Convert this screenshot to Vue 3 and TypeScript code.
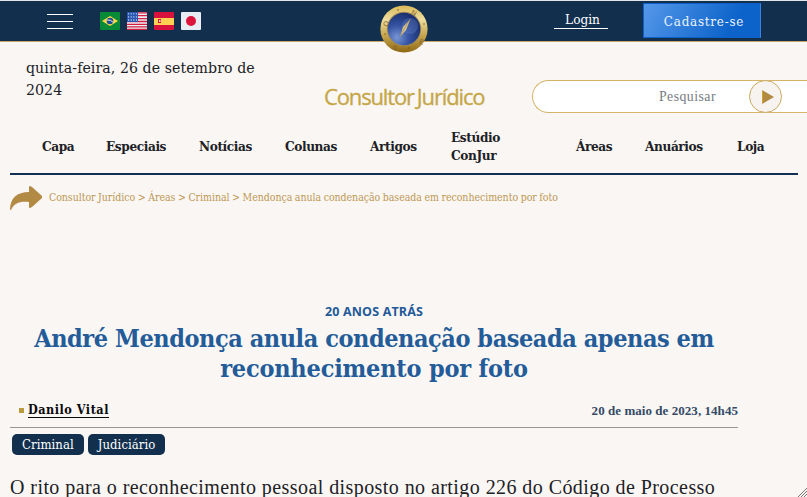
<script setup lang="ts">
const leftNav: string[] = ['Capa', 'Especiais', 'Notícias', 'Colunas', 'Artigos']
const tags: string[] = ['Criminal', 'Judiciário']
const stars: number[] = [0, 1, 2, 3, 4, 5, 6, 7, 8, 9, 10, 11]
</script>

<template>
  <div class="page">
    <header class="topbar">
      <button class="burger" aria-label="Menu"><i></i><i></i><i></i></button>
      <div class="flags">
        <svg viewBox="0 0 20 18"><rect width="20" height="18" rx="1" fill="#078b37" /><path d="M2 9 10 4l8 5-8 5z" fill="#ffda44" /><circle cx="10" cy="9" r="3.3" fill="#194b9b" /><path d="M7 8q4-.5 6 2.2" stroke="#e8edf2" fill="none" /></svg>
        <svg viewBox="0 0 20 18"><rect width="20" height="18" rx="1" fill="#eceef2" /><path d="M0 .8h20M0 3.7h20M0 6.6h20M0 9.5h20M0 12.3h20M0 14.9h20M0 17.5h20" stroke="#d21f43" stroke-width="1.3" /><path d="M0 0h11v10H0z" fill="#2856b0" /><circle v-for="s in stars" :key="s" :cx="1.6 + (s % 4) * 2.6" :cy="1.8 + Math.floor(s / 4) * 3.1" r=".65" fill="#dce6f7" /></svg>
        <svg viewBox="0 0 20 18"><rect width="20" height="18" rx="1" fill="#d8113d" /><path d="M0 6h20v7H0z" fill="#ffd052" /><path d="M4 7h3v4H4z" fill="#d8113d" /><path d="M5 8h1.5v2H5z" fill="#f4dcc1" /></svg>
        <svg viewBox="0 0 20 18"><rect width="20" height="18" rx="1" fill="#e9edf4" /><circle cx="10" cy="9" r="5" fill="#dc153c" /></svg>
      </div>
      <svg class="compass" viewBox="0 0 50 50">
        <defs>
          <linearGradient id="rim" x1="0" y1="0" x2="0" y2="1"><stop stop-color="#d9b958" /><stop offset=".3" stop-color="#eedd9f" /><stop offset=".62" stop-color="#c7a750" /><stop offset="1" stop-color="#8f6713" /></linearGradient>
          <radialGradient id="dial" cx=".28" cy=".76" r=".75"><stop stop-color="#7896d4" /><stop offset=".5" stop-color="#3453a2" /><stop offset="1" stop-color="#1c3274" /></radialGradient>
        </defs>
        <circle cx="25" cy="25" r="23.6" fill="url(#rim)" /><circle cx="25" cy="25" r="17.2" fill="#a28b55" /><circle cx="25" cy="25" r="16.3" fill="url(#dial)" />
        <circle cx="31" cy="22" r="8" fill="#6f8fd0" opacity=".3" />
        <path d="M31.5 15 27 26 21 33 24 23z" fill="#dcc68c" /><path d="M31.5 15 25 25 21 33" stroke="#8f7950" stroke-width=".6" fill="none" />
        <g class="marks"><text x="34" y="11" transform="rotate(24 34 11)">N</text><text x="9" y="21" transform="rotate(-60 9 21)">O</text><text x="15" y="46" transform="rotate(20 15 46)">S</text><text x="42" y="40" transform="rotate(20 42 40)">E</text></g>
        <path d="M19 5v2M44 20h2M5 30h2M30 43v2" stroke="#77571b" stroke-width=".8" />
      </svg>
      <div class="account"><a class="login">Login</a><a class="join">Cadastre-se</a></div>
    </header>

    <section class="masthead">
      <div class="today">quinta-feira, 26 de setembro de 2024</div>
      <div class="logo">Consultor<span>Jurídico</span></div>
      <div class="search"><span>Pesquisar</span><button aria-label="Buscar"><svg viewBox="0 0 12 14"><path d="M0 0 12 7 0 14z" fill="#b18a44" /><path d="M.5 1v12" stroke="#d1a52c" /></svg></button></div>
    </section>

    <nav class="nav">
      <a v-for="item in leftNav" :key="item">{{ item }}</a>
      <a class="studio">Estúdio ConJur</a><a>Áreas</a><a>Anuários</a><a>Loja</a>
    </nav>

    <div class="crumbs">
      <svg viewBox="0 0 32 24"><path d="M19 1Q19 0 20 0l2 1 10 9v2l-10 9-2 1q-1 0-1-1v-5C10 15 4 17 1 24H0C0 12 7 6 19 6z" fill="#b38a43" /></svg>
      <span>Consultor Jurídico &gt; Áreas &gt; Criminal &gt; Mendonça anula condenação baseada em reconhecimento por foto</span>
    </div>

    <article class="article">
      <div class="kicker">20 ANOS ATRÁS</div>
      <h1><span>André Mendonça anula condenação baseada apenas em</span><span class="second">reconhecimento por foto</span></h1>
      <div class="byline"><span class="author"><i></i><a>Danilo Vital</a></span><time>20 de maio de 2023, 14h45</time></div>
      <div class="tags"><a v-for="tag in tags" :key="tag">{{ tag }}</a></div>
      <p>O rito para o reconhecimento pessoal disposto no artigo 226 do Código de Processo</p>
    </article>
    <svg class="grip" viewBox="0 0 9 9"><path d="M0 9 9 0M3 9 9 3M6 9 9 6" stroke="#777" stroke-width="1" /></svg>
  </div>
</template>

<style>
body { margin: 0; background: #faf6f3; overflow: hidden; }
</style>
<style scoped>
* { box-sizing: border-box; }
.page { position: relative; width: 807px; height: 497px; overflow: hidden; background: #faf6f3; color: #202126; font-family: "DejaVu Serif Condensed", "DejaVu Serif", serif; font-stretch: condensed; }
button { border: 0; padding: 0; background: none; }
.topbar { position: relative; display: flex; height: 42px; border-top: 1px solid #e2e5e5; border-bottom: 1px solid #c9a766; background: #122f4d; }
.burger { display: flex; flex-direction: column; gap: 6px; width: 26px; margin: 13px 0 0 47px; }
.burger i { height: 1px; background: #fff; }
.flags { display: flex; gap: 7px; margin: 11px 0 0 27px; }
.flags svg { width: 20px; height: 18px; }
.compass { position: absolute; left: 379px; top: 3px; width: 50px; height: 50px; }
.marks { font: 7px "Liberation Sans", sans-serif; fill: #80632c; text-anchor: middle; }
.account { display: flex; margin-left: auto; padding-right: 46px; }
.login { width: 54px; height: 20px; margin: 8px 35px 0 0; padding-left: 3px; border-bottom: 1px solid #fff; color: #fff; font-size: 13.5px; line-height: 20px; text-align: center; }
.join { width: 118px; height: 35px; margin-top: 2px; padding-left: 4px; border: 1px solid #0b61c9; border-right: 1px solid #3a82dc; background: linear-gradient(120deg, #5598ea, #0c63c9 75%); color: #edf4ff; font-size: 13.3px; letter-spacing: .75px; line-height: 35px; text-align: center; }
.masthead { display: flex; height: 78px; }
.today { width: 250px; margin: 15px 0 0 26px; font-size: 15.7px; line-height: 21.5px; letter-spacing: .08px; }
.logo { width: 162px; margin: 39px 0 0 48px; color: #c5a647; font: 22px/30px "Open Sans", sans-serif; letter-spacing: -1.15px; white-space: nowrap; -webkit-text-stroke: .3px #c5a647; }
.logo span { margin-left: 3px; }
.search { display: flex; align-items: center; flex: 1; height: 33px; margin: 38px -10px 0 46px; border: 1px solid #d5b369; border-right: 0; border-radius: 17px 0 0 17px; background: #fff; color: #777c81; font: 13.8px "Liberation Serif", serif; letter-spacing: .45px; }
.search span { width: 90px; margin-left: 126px; }
.search button { display: grid; place-items: center; flex: none; width: 33px; height: 33px; padding-left: 4px; border: 1px solid #c9a95e; border-radius: 50%; background: #f7f3f1; }
.search svg { width: 12px; height: 14px; }
.nav { display: grid; grid-template-columns: 64px 93px 86px 85px 81px 125px 69px 92px 50px; align-items: center; width: 788px; height: 55px; margin-left: 10px; padding: 0 0 2px 32px; border-bottom: 2px solid #122f55; font-size: 13.5px; font-weight: 700; line-height: 18px; letter-spacing: -.4px; }
.studio { width: 60px; }
.crumbs { display: flex; align-items: center; gap: 7px; height: 24px; margin: 11px 0 0 10px; color: #bd9854; font-size: 10.5px; white-space: nowrap; letter-spacing: -.05px; word-spacing: -.35px; }
.crumbs svg { width: 32px; height: 24px; }
.crumbs span { margin-top: -2px; }
.article { width: 728px; margin: 93px 0 0 10px; }
.kicker { height: 18px; color: #225998; font: 700 12.5px/18px "Open Sans", sans-serif; text-align: center; letter-spacing: .16px; }
h1 { margin: 3px 0 0; color: #235c99; font-size: 25px; line-height: 30px; text-align: center; letter-spacing: -.45px; white-space: nowrap; }
h1 span { display: block; }
.second { letter-spacing: -.2px; }
.byline { display: flex; justify-content: space-between; height: 44px; padding-top: 16px; border-bottom: 1px solid #999691; }
.author { display: flex; height: 18px; align-items: center; gap: 4px; margin: 1px 0 0 9px; color: #08090a; font-size: 12.5px; font-weight: 700; letter-spacing: .52px; }
.author i { width: 5px; height: 5px; background: #b99a3d; }
.author a { height: 16px; border-bottom: 1px solid #08090a; line-height: 15px; }
time { color: #344b67; font: 700 13px/20px "Liberation Serif", serif; letter-spacing: .05px; margin-top: 1px; }
.tags { display: flex; gap: 4px; padding: 6px 2px 0; }
.tags a { height: 21px; padding: 0 10px; border-radius: 5px; background: #122f4d; color: #fff; font-size: 13px; line-height: 21px; letter-spacing: .05px; }
p { margin: 19px 0 0; font: 20px/26px "Liberation Serif", serif; letter-spacing: .43px; white-space: nowrap; }
.grip { position: absolute; right: 0; bottom: 0; width: 9px; height: 9px; }
</style>
